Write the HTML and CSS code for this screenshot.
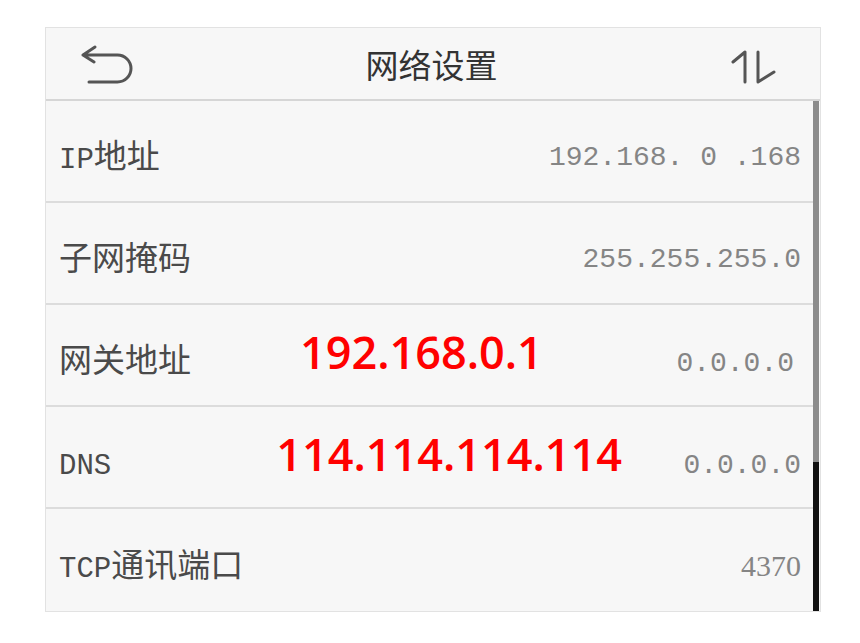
FILE: index.html
```html
<!DOCTYPE html>
<html lang="zh-CN">
<head>
    <meta charset="UTF-8">
    <meta name="viewport" content="width=device-width, initial-scale=1.0">
    <title>网络设置</title>
    <link rel="stylesheet" href="styles.css">
</head>
<body>
    <div class="screen">
        <header class="topBar">
            <svg class="backIcon" width="52" height="44" viewBox="0 0 52 44">
                <path d="M14 4 L2 12 L13 19 M2 12 H36.5 A13.5 13.5 0 0 1 36.5 39 H8" />
            </svg>
            <h1 class="title">网络设置</h1>
            <svg class="sortIcon" width="48" height="36" viewBox="0 0 48 36">
                <path d="M3 13 L15 3 V33 M28 3 V33 L44 23" />
            </svg>
        </header>

        <div class="body">
            <ul class="list">
                <li class="row">
                    <span class="label"><span class="latin">IP</span>地址</span>
                    <span class="value">192.168. 0 .168</span>
                </li>
                <li class="row">
                    <span class="label">子网掩码</span>
                    <span class="value">255.255.255.0</span>
                </li>
                <li class="row">
                    <span class="label">网关地址</span>
                    <span class="note note--gateway">192.168.0.1</span>
                    <span class="value value--low value--inset">0.0.0.0</span>
                </li>
                <li class="row">
                    <span class="label"><span class="latin">DNS</span></span>
                    <span class="note note--dns">114.114.114.114</span>
                    <span class="value value--low">0.0.0.0</span>
                </li>
                <li class="row">
                    <span class="label"><span class="latin">TCP</span>通讯端口</span>
                    <span class="value value--serif">4370</span>
                </li>
            </ul>
            <div class="scrollBar">
                <div class="scrollThumb"></div>
            </div>
        </div>
    </div>
</body>
</html>
```

FILE: styles.css
```css
* {
    margin: 0;
    padding: 0;
    box-sizing: border-box;
}

body {
    background-color: #fff;
    font-family: "Noto Sans CJK SC", "Noto Sans", sans-serif;
    color: #444;
}

.screen {
    width: 776px;
    margin: 27px 0 0 45px;
    background-color: #f7f7f7;
    border: 1px solid #e2e2e2;
}

/* Header */
.topBar {
    height: 73px;
    display: flex;
    align-items: center;
    justify-content: space-between;
    padding: 0 42px 0 35px;
    border-bottom: 2px solid #d6d6d6;
}

.backIcon,
.sortIcon {
    fill: none;
    stroke: #555;
    stroke-width: 3;
    stroke-linecap: round;
    stroke-linejoin: round;
}

.backIcon {
    margin-top: 3px;
}

.sortIcon {
    margin-top: 6px;
}

.title {
    font-size: 33px;
    font-weight: normal;
    color: #333;
    margin-top: 1px;
}

/* List */
.body {
    display: flex;
}

.list {
    list-style: none;
    flex: 1;
}

.row {
    height: 102px;
    display: flex;
    align-items: center;
    padding: 6px 12px 0 13px;
    border-bottom: 2px solid #dcdcdc;
}

.row:last-child {
    border-bottom: none;
}

.label {
    font-size: 33px;
    color: #4a4a4a;
    white-space: nowrap;
}

.latin {
    font-family: "Liberation Mono", monospace;
    font-size: 29px;
}

.note {
    font-family: "Open Sans", "Noto Sans", sans-serif;
    font-weight: 600;
    font-size: 45px;
    color: #ff0000;
    margin-bottom: 14px;
}

.note--gateway {
    margin-left: 109px;
}

.note--dns {
    margin-left: 165px;
}

.value {
    margin-left: auto;
    margin-top: 6px;
    font-family: "Liberation Mono", monospace;
    font-size: 28px;
    color: #858585;
    white-space: pre;
}

.value--low {
    margin-top: 10px;
}

.value--inset {
    margin-right: 7px;
}

.value--serif {
    font-family: "Liberation Serif", serif;
    font-size: 30px;
}

/* Scroll bar */
.scrollBar {
    width: 6px;
    margin-right: 1px;
    background-color: #8c8c8c;
    display: flex;
    flex-direction: column;
    justify-content: flex-end;
}

.scrollThumb {
    height: 149px;
    background-color: #111;
}
```
